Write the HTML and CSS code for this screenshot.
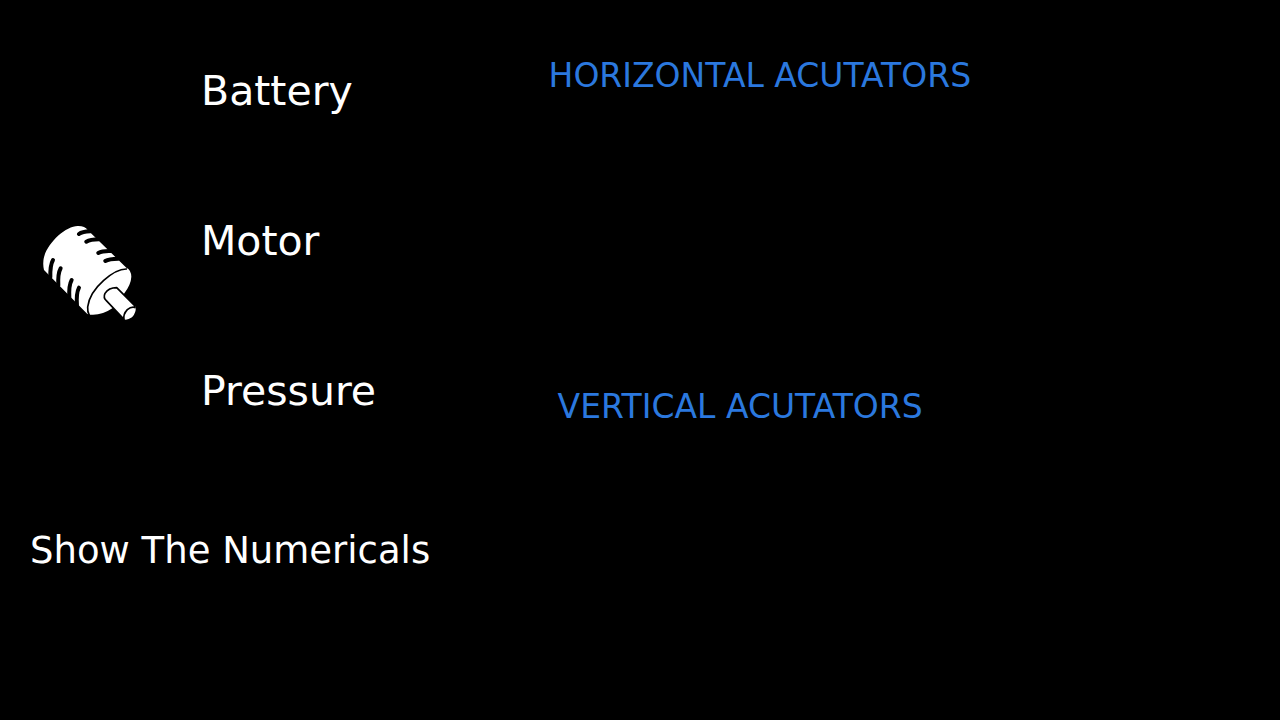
FILE: index.html
```html
<!DOCTYPE html>
<html lang="en">
<head>
<meta charset="utf-8">
<title>Actuator Status</title>
<link rel="stylesheet" href="styles.css">
</head>
<body>
<main class="dashboard">
  <section class="readings">
    <div class="reading"><span class="icon-slot"></span><h2 class="label">Battery</h2></div>
    <div class="reading">
      <span class="icon-slot">
        <svg class="motor" viewBox="24 21 282 288" aria-hidden="true">
          <path fill="#fff" d="M25 132C26 84 91 22 130 24Q150 24 158 36L274 149Q288 155 289 176Q288 200 267 227L232 271Q200 293 166 290L157 288L27 156Q24 143 25 132Z"/>
          <g fill="none" stroke="#000" stroke-width="12" stroke-linecap="round">
            <path d="M132 48Q141 41 166 40M154 71Q166 64 192 64M190 105Q202 98 228 99M211 129Q222 122 250 122"/>
            <path d="M54 126Q45 142 46 178M77 151Q68 167 70 203M110 186Q101 202 103 239M132 209Q123 226 126 264"/>
          </g>
          <path fill="#fff" d="M214 248L267 304Q276 308 291 298Q304 284 302 266L245 209Q221 209 210 226Q204 239 214 248Z"/>
          <path fill="none" stroke="#000" stroke-width="5" d="M276 153C240 151 165 208 158 267Q157 282 163 292"/>
          <path fill="none" stroke="#000" stroke-width="5" stroke-linejoin="round" d="M302 266L245 209Q221 209 210 226Q204 239 214 248L267 304Q264 289 277 275Q290 264 302 269"/>
        </svg>
      </span>
      <h2 class="label">Motor</h2>
    </div>
    <div class="reading"><span class="icon-slot"></span><h2 class="label">Pressure</h2></div>
    <button class="toggle" type="button">Show The Numericals</button>
  </section>
  <section class="actuators">
    <h2 class="group">HORIZONTAL ACUTATORS</h2>
    <h2 class="group group-vertical">VERTICAL ACUTATORS</h2>
  </section>
</main>
</body>
</html>
```
FILE: styles.css
```css
body {
  margin: 0;
  background: #000;
  color: #fff;
  font-family: Verdana, "DejaVu Sans", sans-serif;
}
.dashboard {
  display: grid;
  grid-template-columns: 3fr 4fr;
  min-height: 100vh;
}
.readings {
  padding: 66px 0 0 30px;
}
.reading {
  display: flex;
  align-items: flex-start;
  min-height: 150px;
}
.icon-slot {
  box-sizing: border-box;
  width: 171px;
  padding: 9px 13px 0;
}
.motor {
  display: block;
  width: 94px;
  height: 96px;
}
.label {
  margin: 0;
  font-size: 41px;
  font-weight: 400;
  line-height: 50px;
}
.toggle {
  margin-top: 10px;
  padding: 0;
  border: 0;
  background: none;
  color: inherit;
  font-family: inherit;
  font-size: 37px;
  line-height: 50px;
  white-space: nowrap;
  cursor: pointer;
}
.actuators {
  padding-top: 56px;
}
.group {
  margin: 0;
  color: #2b78de;
  font-size: 33px;
  font-weight: 400;
  line-height: 40px;
}
.group-vertical {
  margin-top: 291px;
  padding-left: 9px;
}
```
